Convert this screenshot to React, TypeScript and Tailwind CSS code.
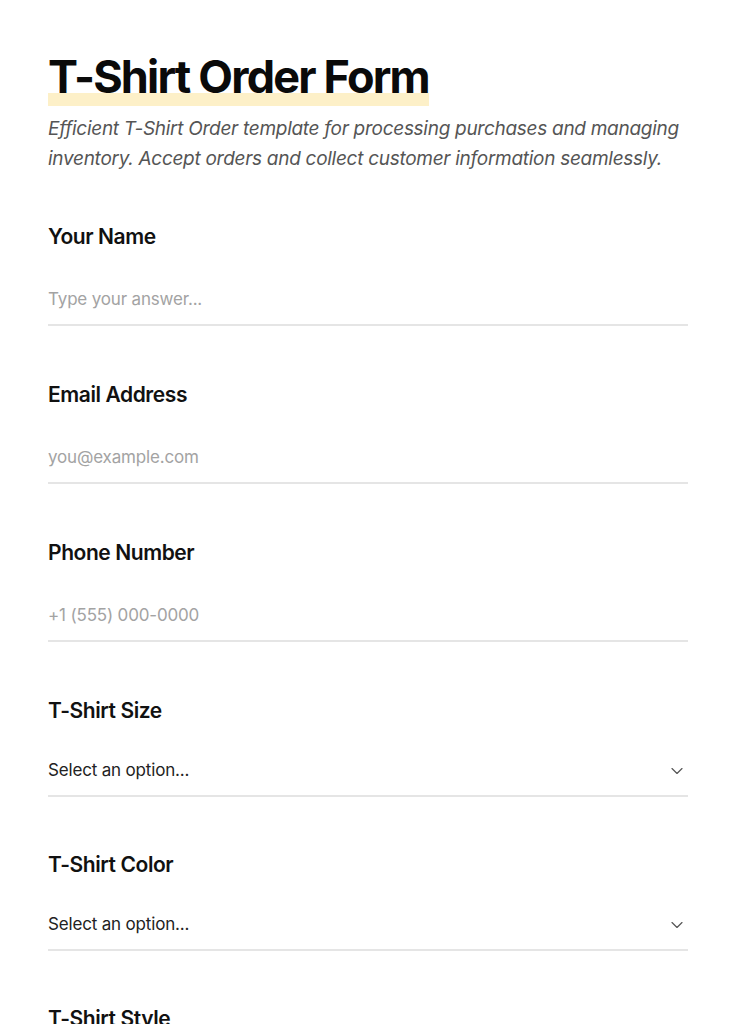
import { ChevronDown } from "lucide-react";

const fields = [
  { label: "Your Name", placeholder: "Type your answer..." },
  { label: "Email Address", placeholder: "you@example.com" },
  { label: "Phone Number", placeholder: "+1 (555) 000-0000" },
];

const selects = ["T-Shirt Size", "T-Shirt Color", "T-Shirt Style"];

function TextField({ label, placeholder }: { label: string; placeholder: string }) {
  return (
    <div className="mb-[55px]">
      <label className="block text-[21px] font-semibold leading-[28px] tracking-[-0.02em] text-[#111]">
        {label}
      </label>
      <input
        type="text"
        placeholder={placeholder}
        className="mt-[29px] block h-[46px] w-full border-b-2 border-[#e5e5e5] bg-transparent pb-[6px] text-[17px] tracking-[-0.01em] text-[#111] outline-none placeholder:text-[#a3a3a3]"
      />
    </div>
  );
}

function SelectField({ label }: { label: string }) {
  return (
    <div className="mb-[54px]">
      <label className="block text-[21px] font-semibold leading-[28px] tracking-[-0.02em] text-[#111]">
        {label}
      </label>
      <div className="mt-[22px] flex h-[50px] w-full items-center justify-between border-b-2 border-[#e5e5e5]">
        <span className="text-[17px] tracking-[-0.01em] text-[#222]">Select an option...</span>
        <ChevronDown className="mr-[1px] h-[20px] w-[20px] text-[#555]" strokeWidth={1.4} />
      </div>
    </div>
  );
}

export default function App() {
  return (
    <div className="min-h-screen bg-white font-['Inter',sans-serif]">
      <div className="px-12 pt-[48px]">
        <h1 className="inline-block bg-[linear-gradient(transparent_78%,#fdf0c8_78%)] text-[45px] font-bold leading-[58px] tracking-[-0.04em] text-[#0a0a0a]">
          T-Shirt Order Form
        </h1>
        <p className="mt-[8px] text-[19px] italic leading-[30px] tracking-[-0.015em] text-[#555]">
          Efficient T-Shirt Order template for processing purchases and managing inventory. Accept
          orders and collect customer information seamlessly.
        </p>
        <div className="mt-[49px]">
          {fields.map((f) => (
            <TextField key={f.label} label={f.label} placeholder={f.placeholder} />
          ))}
          {selects.map((s) => (
            <SelectField key={s} label={s} />
          ))}
        </div>
      </div>
    </div>
  );
}
